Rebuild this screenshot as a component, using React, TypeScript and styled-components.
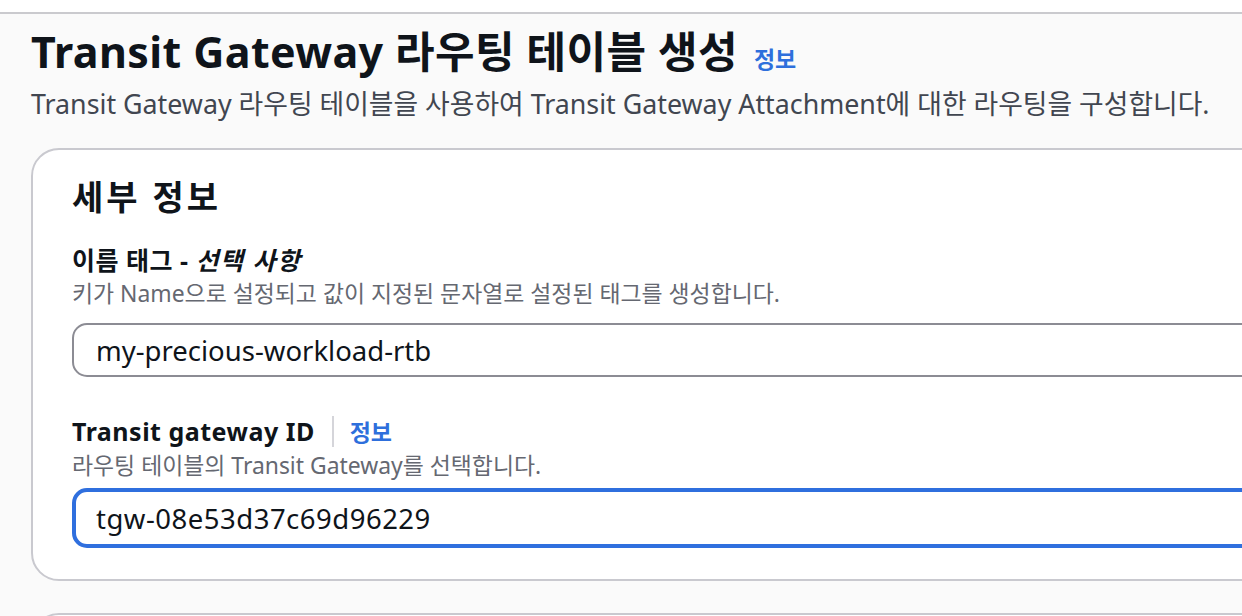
import React from "react";
import styled, { createGlobalStyle } from "styled-components";

const GlobalStyle = createGlobalStyle`
  html, body {
    margin: 0;
    padding: 0;
    background: #fafafa;
    overflow: hidden;
  }
  body {
    font-family: "Noto Sans", "Noto Sans CJK KR", sans-serif;
    color: #0f141a;
  }
`;

const Page = styled.div`
  width: 1242px;
  height: 616px;
  overflow: hidden;
  background: #fafafa;
`;

const TopStrip = styled.div`
  height: 12px;
  background: #ffffff;
  border-bottom: 2px solid #cacace;
`;

const Main = styled.main`
  padding: 0 0 0 31px;
  display: flex;
  flex-direction: column;
`;

const Header = styled.header`
  display: flex;
  flex-direction: column;
  margin-top: 12px;
`;

const TitleRow = styled.div`
  display: flex;
  align-items: baseline;
  gap: 16px;
`;

const Title = styled.h1`
  margin: 0;
  font-size: 43px;
  line-height: 52px;
  font-weight: 700;
  letter-spacing: 0.4px;
  color: #0f141a;
  white-space: nowrap;
`;

const InfoLink = styled.a<{ $size: number }>`
  font-size: ${(p) => p.$size}px;
  font-weight: 700;
  color: #2e6fdc;
  text-decoration: none;
  cursor: pointer;
  white-space: nowrap;
`;

const Subtitle = styled.p`
  margin: 10px 0 0;
  font-size: 26.8px;
  line-height: 32px;
  color: #414650;
  white-space: nowrap;
`;

const Card = styled.section`
  margin-top: 28px;
  width: 1400px;
  background: #ffffff;
  border: 2px solid #c9c9cf;
  border-radius: 28px;
  padding: 27px 40px 31px 39px;
  box-sizing: border-box;
  display: flex;
  flex-direction: column;
`;

const NextCard = styled(Card)`
  margin-top: 32px;
  height: 80px;
`;

const CardTitle = styled.h2`
  margin: 0 0 27px;
  font-size: 34px;
  line-height: 40px;
  font-weight: 700;
  letter-spacing: 3px;
  color: #0f141a;
`;

const Field = styled.div<{ $gapTop?: number }>`
  display: flex;
  flex-direction: column;
  margin-top: ${(p) => p.$gapTop ?? 0}px;
`;

const LabelRow = styled.div`
  display: flex;
  align-items: center;
  min-height: 32px;
`;

const Label = styled.label`
  font-size: 25px;
  line-height: 30px;
  font-weight: 700;
  letter-spacing: 0.5px;
  color: #0f141a;
  white-space: nowrap;
`;

const Optional = styled.i`
  font-style: italic;
  font-weight: 700;
  letter-spacing: 1.5px;
`;

const Divider = styled.span`
  display: inline-block;
  width: 2px;
  height: 31px;
  background: #d5d5da;
  margin: 0 16px 0 17px;
`;

const Description = styled.div`
  font-size: 22.9px;
  line-height: 28px;
  color: #656871;
  margin-top: 4px;
  white-space: nowrap;
`;

const Input = styled.input<{ $focused?: boolean }>`
  margin-top: ${(p) => (p.$focused ? 8 : 15)}px;
  width: 100%;
  box-sizing: border-box;
  height: ${(p) => (p.$focused ? 60 : 54)}px;
  border: ${(p) => (p.$focused ? "4px solid #2f6fde" : "2px solid #8c8c94")};
  border-radius: 15px;
  padding: 0 0 0 ${(p) => (p.$focused ? 20 : 22)}px;
  font-family: "Noto Sans", "Noto Sans CJK KR", sans-serif;
  font-size: 27.5px;
  letter-spacing: ${(p) => (p.$focused ? 0.5 : 0)}px;
  color: #0f141a;
  background: #ffffff;
  outline: none;
`;

export default function App() {
  return (
    <>
      <GlobalStyle />
      <Page>
        <TopStrip />
        <Main>
          <Header>
            <TitleRow>
              <Title>Transit Gateway 라우팅 테이블 생성</Title>
              <InfoLink $size={23}>정보</InfoLink>
            </TitleRow>
            <Subtitle>
              Transit Gateway 라우팅 테이블을 사용하여 Transit Gateway Attachment에 대한 라우팅을 구성합니다.
            </Subtitle>
          </Header>
          <Card>
            <CardTitle>세부 정보</CardTitle>
            <Field>
              <LabelRow>
                <Label>
                  이름 태그 - <Optional>선택 사항</Optional>
                </Label>
              </LabelRow>
              <Description>키가 Name으로 설정되고 값이 지정된 문자열로 설정된 태그를 생성합니다.</Description>
              <Input defaultValue="my-precious-workload-rtb" readOnly />
            </Field>
            <Field $gapTop={37}>
              <LabelRow>
                <Label>Transit gateway ID</Label>
                <Divider />
                <InfoLink $size={23}>정보</InfoLink>
              </LabelRow>
              <Description>라우팅 테이블의 Transit Gateway를 선택합니다.</Description>
              <Input $focused defaultValue="tgw-08e53d37c69d96229" readOnly />
            </Field>
          </Card>
          <NextCard />
        </Main>
      </Page>
    </>
  );
}
